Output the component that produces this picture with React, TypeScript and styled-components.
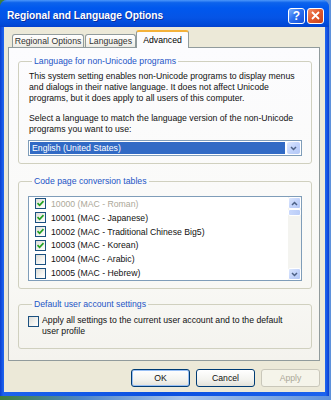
import styled, { createGlobalStyle } from 'styled-components';

const GlobalStyle = createGlobalStyle`
  html, body {
    margin: 0;
    padding: 0;
  }
  body {
    width: 331px;
    height: 400px;
    overflow: hidden;
    background: linear-gradient(90deg, #3f7f3c 0%, #4f86c8 25%, #a8c4ea 55%, #5f92dc 100%);
    font-family: 'Liberation Sans', Arial, sans-serif;
    font-size: 8.7px;
    color: #000;
  }
`;

const Chevron = ({ up }: { up?: boolean }) => (
  <svg width='7' height='5' viewBox='0 0 7 5'>
    <path
      d={up ? 'M1 4 L3.5 1.5 L6 4' : 'M1 1 L3.5 3.5 L6 1'}
      fill='none'
      stroke='#4d6185'
      strokeWidth='1.5'
    />
  </svg>
);

const Tick = () => (
  <svg width='9' height='9' viewBox='0 0 9 9'>
    <path d='M1.5 4.2 L3.6 6.3 L7.5 2.2' fill='none' stroke='#21a121' strokeWidth='1.7' />
  </svg>
);

const CloseGlyph = () => (
  <svg width='9' height='9' viewBox='0 0 9 9'>
    <path d='M1 1 L8 8 M8 1 L1 8' stroke='#fff' strokeWidth='1.8' />
  </svg>
);

const codePages = [
  { label: '10000 (MAC - Roman)', checked: true, disabled: true },
  { label: '10001 (MAC - Japanese)', checked: true },
  { label: '10002 (MAC - Traditional Chinese Big5)', checked: true },
  { label: '10003 (MAC - Korean)', checked: true },
  { label: '10004 (MAC - Arabic)', checked: false },
  { label: '10005 (MAC - Hebrew)', checked: false },
];

const App = () => {
  return (
    <>
      <GlobalStyle />
      <Window>
        <TitleBar>
          <Title>Regional and Language Options</Title>
          <CaptionButtons>
            <CaptionButton $variant='help'>?</CaptionButton>
            <CaptionButton $variant='close'>
              <CloseGlyph />
            </CaptionButton>
          </CaptionButtons>
        </TitleBar>

        <Body>
          <TabStrip>
            <Tab $width={72}>Regional Options</Tab>
            <Tab $width={51}>Languages</Tab>
            <Tab $width={53} $active>
              Advanced
            </Tab>
          </TabStrip>

          <Panel>
            <Group>
              <Legend>Language for non-Unicode programs</Legend>
              <Para>
                This system setting enables non-Unicode programs to display menus
                <br />
                and dialogs in their native language. It does not affect Unicode
                <br />
                programs, but it does apply to all users of this computer.
              </Para>
              <Para $gap={9}>
                Select a language to match the language version of the non-Unicode
                <br />
                programs you want to use:
              </Para>
              <Combo>
                <ComboValue>English (United States)</ComboValue>
                <DropButton>
                  <Chevron />
                </DropButton>
              </Combo>
            </Group>

            <Group $gap={12} $padTop={9}>
              <Legend>Code page conversion tables</Legend>
              <ListBox>
                <Rows>
                  {codePages.map((item) => (
                    <Row key={item.label} $disabled={item.disabled}>
                      <Check>{item.checked && <Tick />}</Check>
                      <span>{item.label}</span>
                    </Row>
                  ))}
                </Rows>
                <ScrollBar>
                  <ScrollButton>
                    <Chevron up />
                  </ScrollButton>
                  <Thumb />
                  <ScrollTrack />
                  <ScrollButton>
                    <Chevron />
                  </ScrollButton>
                </ScrollBar>
              </ListBox>
            </Group>

            <Group $gap={10} $padTop={5} $padBottom={11}>
              <Legend>Default user account settings</Legend>
              <CheckRow>
                <Check $boxed />
                <span>
                  Apply all settings to the current user account and to the default
                  <br />
                  user profile
                </span>
              </CheckRow>
            </Group>
          </Panel>

          <Footer>
            <Button $variant='default'>OK</Button>
            <Button>Cancel</Button>
            <Button $variant='disabled'>Apply</Button>
          </Footer>
        </Body>
      </Window>
    </>
  );
};

export default App;

const Window = styled.div`
  width: 329px;
  height: 396px;
  display: flex;
  flex-direction: column;
  border-radius: 7px 7px 0 0;
  overflow: hidden;
  background: linear-gradient(90deg, #0a3fd0 0%, #1c62ee 1%, #0a50e0 50%, #1c62ee 99%, #0a3fd0 100%);
`;

const TitleBar = styled.div`
  height: 28px;
  padding: 4px 5px 0 7px;
  box-sizing: border-box;
  display: flex;
  align-items: center;
  justify-content: space-between;
  background: linear-gradient(180deg, #4c97fa 0%, #0d63ec 10%, #0058ee 30%, #0554e6 65%, #004ad9 90%, #0341cd 100%);
`;

const Title = styled.div`
  color: #fff;
  font-weight: bold;
  font-size: 10.2px;
  text-shadow: 1px 1px 0 #0a2f9e;
`;

const CaptionButtons = styled.div`
  display: flex;
  gap: 2px;
`;

const CaptionButton = styled.div<{ $variant: 'help' | 'close' }>`
  width: 17px;
  height: 16px;
  box-sizing: border-box;
  border: 1px solid #fff;
  border-radius: 3px;
  display: flex;
  align-items: center;
  justify-content: center;
  color: #fff;
  font-weight: bold;
  font-size: 12px;
  background: ${(p) =>
    p.$variant === 'close'
      ? 'linear-gradient(135deg, #f2916c 0%, #e35b2e 45%, #c9431b 100%)'
      : 'linear-gradient(135deg, #7fb1fa 0%, #2c70f0 45%, #1450d8 100%)'};
`;

const Body = styled.div`
  flex: 1;
  margin: 0 4px 4px;
  padding: 3px 5px 5px 4px;
  display: flex;
  flex-direction: column;
  background: #ece9d8;
`;

const TabStrip = styled.div`
  height: 17px;
  display: flex;
  align-items: flex-end;
  gap: 1px;
  padding-left: 4px;
  position: relative;
  z-index: 1;
`;

const Tab = styled.div<{ $width: number; $active?: boolean }>`
  width: ${(p) => p.$width}px;
  height: ${(p) => (p.$active ? 18 : 13)}px;
  box-sizing: border-box;
  margin-bottom: ${(p) => (p.$active ? -1 : 0)}px;
  margin-left: ${(p) => (p.$active ? -1 : 0)}px;
  display: flex;
  align-items: ${(p) => (p.$active ? 'flex-start' : 'center')};
  justify-content: center;
  padding-top: ${(p) => (p.$active ? 3 : 0)}px;
  border: 1px solid #919b9c;
  border-bottom: none;
  border-top: ${(p) => (p.$active ? '2px solid #f4b23a' : '1px solid #919b9c')};
  border-radius: 3px 3px 0 0;
  color: ${(p) => (p.$active ? '#000' : '#333')};
  background: ${(p) =>
    p.$active ? '#fcfcfe' : 'linear-gradient(180deg, #ffffff 0%, #f6f5f0 60%, #ecebe4 100%)'};
`;

const Panel = styled.div`
  flex: 1;
  display: flex;
  flex-direction: column;
  padding: 8px 7px 11px 9px;
  border: 1px solid #919b9c;
  background: linear-gradient(180deg, #fcfcfe 0%, #f9f9f6 70%, #f4f3ee 100%);
`;

const Group = styled.fieldset<{ $gap?: number; $padTop?: number; $padBottom?: number }>`
  margin: ${(p) => p.$gap ?? 0}px 0 0;
  padding: ${(p) => p.$padTop ?? 4}px 9px ${(p) => p.$padBottom ?? 7}px 9px;
  border: 1px solid #d0d0bf;
  border-radius: 3px;
  min-inline-size: 0;
`;

const Legend = styled.legend`
  padding: 0 2px;
  margin-left: 4px;
  height: 11px;
  line-height: 11px;
  color: #2455c6;
`;

const Para = styled.p<{ $gap?: number }>`
  margin: ${(p) => p.$gap ?? 0}px 0 0 1px;
  line-height: 11px;
  white-space: nowrap;
  color: #111;
`;

const Combo = styled.div`
  margin-top: 5px;
  height: 16px;
  box-sizing: border-box;
  border: 1px solid #7f9db9;
  background: #fff;
  display: flex;
  align-items: stretch;
  padding: 1px;
`;

const ComboValue = styled.div`
  flex: 1;
  background: #316ac5;
  color: #fff;
  display: flex;
  align-items: center;
  padding-left: 2px;
  margin-right: 2px;
`;

const DropButton = styled.div`
  width: 13px;
  display: flex;
  align-items: center;
  justify-content: center;
  border-radius: 2px;
  background: linear-gradient(135deg, #dfe8fd 0%, #c1d3fb 50%, #b4c8f6 100%);
`;

const ListBox = styled.div`
  height: 85px;
  box-sizing: border-box;
  border: 1px solid #7f9db9;
  background: #fff;
  display: flex;
`;

const Rows = styled.div`
  flex: 1;
  display: flex;
  flex-direction: column;
`;

const Row = styled.div<{ $disabled?: boolean }>`
  height: 14px;
  display: flex;
  align-items: center;
  gap: 5px;
  padding-left: 6px;
  color: ${(p) => (p.$disabled ? '#aca899' : '#111')};
  white-space: nowrap;
`;

const Check = styled.div<{ $boxed?: boolean }>`
  width: 11px;
  height: 11px;
  flex: none;
  box-sizing: border-box;
  border: 1px solid #1c5180;
  display: flex;
  align-items: center;
  justify-content: center;
  background: linear-gradient(135deg, #dcdcd7 0%, #f4f4f1 60%, #ffffff 100%);
  margin-top: ${(p) => (p.$boxed ? 1 : 0)}px;
`;

const ScrollBar = styled.div`
  width: 13px;
  display: flex;
  flex-direction: column;
  background: #f4f4f0;
`;

const ScrollButton = styled.div`
  height: 12px;
  box-sizing: border-box;
  display: flex;
  align-items: center;
  justify-content: center;
  border: 1px solid #fff;
  border-radius: 2px;
  background: linear-gradient(135deg, #dde7fd 0%, #c3d4fb 50%, #b2c6f5 100%);
`;

const Thumb = styled.div`
  height: 7px;
  box-sizing: border-box;
  border: 1px solid #fff;
  border-radius: 2px;
  background: linear-gradient(90deg, #c9d8fc 0%, #bacdf8 100%);
`;

const ScrollTrack = styled.div`
  flex: 1;
`;

const CheckRow = styled.div`
  display: flex;
  align-items: flex-start;
  gap: 3px;
  line-height: 11px;
  white-space: nowrap;
  color: #111;
`;

const Footer = styled.div`
  display: flex;
  justify-content: flex-end;
  gap: 6px;
  margin-top: 8px;
`;

const Button = styled.div<{ $variant?: 'default' | 'disabled' }>`
  width: 59px;
  height: 18px;
  box-sizing: border-box;
  display: flex;
  align-items: center;
  justify-content: center;
  border-radius: 3px;
  border: 1px solid ${(p) => (p.$variant === 'disabled' ? '#c9c7ba' : '#003c74')};
  color: ${(p) => (p.$variant === 'disabled' ? '#aca899' : '#111')};
  background: ${(p) =>
    p.$variant === 'disabled' ? '#f5f4ea' : 'linear-gradient(180deg, #ffffff 0%, #f3f3ef 60%, #e3e2da 100%)'};
  box-shadow: ${(p) => (p.$variant === 'default' ? 'inset 0 0 0 1px #99c0f5' : 'none')};
`;
